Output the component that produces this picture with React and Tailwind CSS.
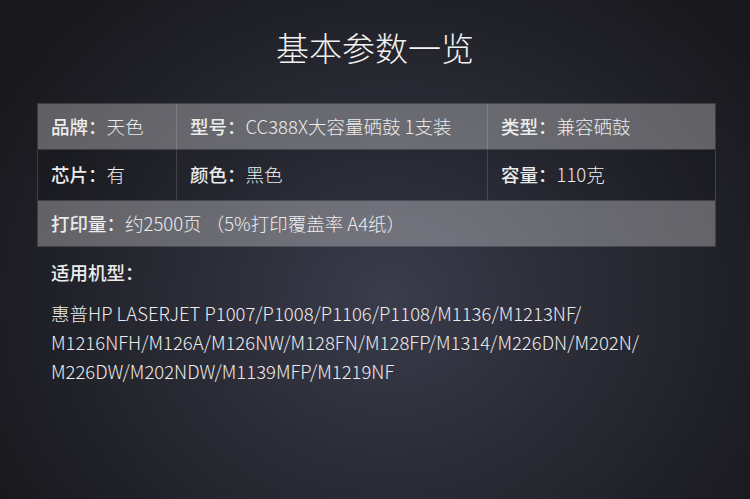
const FONT = { fontFamily: '"Noto Sans CJK SC", "Noto Sans", sans-serif' }

const ROW1 = [
  { label: '品牌：', value: '天色' },
  { label: '型号：', value: 'CC388X大容量硒鼓 1支装' },
  { label: '类型：', value: '兼容硒鼓' },
]
const ROW2 = [
  { label: '芯片：', value: '有' },
  { label: '颜色：', value: '黑色' },
  { label: '容量：', value: '110克' },
]

const MODELS = [
  '惠普HP LASERJET P1007/P1008/P1106/P1108/M1136/M1213NF/',
  'M1216NFH/M126A/M126NW/M128FN/M128FP/M1314/M226DN/M202N/',
  'M226DW/M202NDW/M1139MFP/M1219NF',
]

function Cell({ label, value, last }) {
  return (
    <div className={`flex items-center pl-[13px] ${last ? '' : 'border-r border-white/15'}`}>
      <span className="font-medium">{label}</span>
      <span className="font-light">{value}</span>
    </div>
  )
}

export default function App() {
  return (
    <div
      style={FONT}
      className="w-[750px] h-[499px] overflow-hidden bg-[radial-gradient(ellipse_60%_80%_at_52%_60%,#3b3c4c_0%,#2a2b35_45%,#18181d_100%)] text-[#ececec]"
    >
      <h1 className="pt-[27px] h-[67px] text-center text-[33px] leading-[40px] font-light text-[#f2f2f2]">
        基本参数一览
      </h1>

      <div className="ml-[37px] mt-[36px] w-[679px] border border-white/15 text-[18.5px]">
        <div className="grid grid-cols-[139px_311px_229px] h-[45px] bg-white/30">
          {ROW1.map((c, i) => (
            <Cell key={c.label} {...c} last={i === 2} />
          ))}
        </div>
        <div className="grid grid-cols-[139px_311px_229px] h-[52px] bg-black/10 border-y border-white/15">
          {ROW2.map((c, i) => (
            <Cell key={c.label} {...c} last={i === 2} />
          ))}
        </div>
        <div className="flex items-center h-[45px] pl-[13px] bg-white/30">
          <span className="font-medium">打印量：</span>
          <span className="font-light">约2500页 （5%打印覆盖率 A4纸）</span>
        </div>
      </div>

      <div className="ml-[51px] mt-[11px] text-[18.5px] leading-[29px]">
        <p className="font-medium">适用机型：</p>
        <div className="mt-[12px] font-light">
          {MODELS.map((line) => (
            <p key={line}>{line}</p>
          ))}
        </div>
      </div>
    </div>
  )
}
